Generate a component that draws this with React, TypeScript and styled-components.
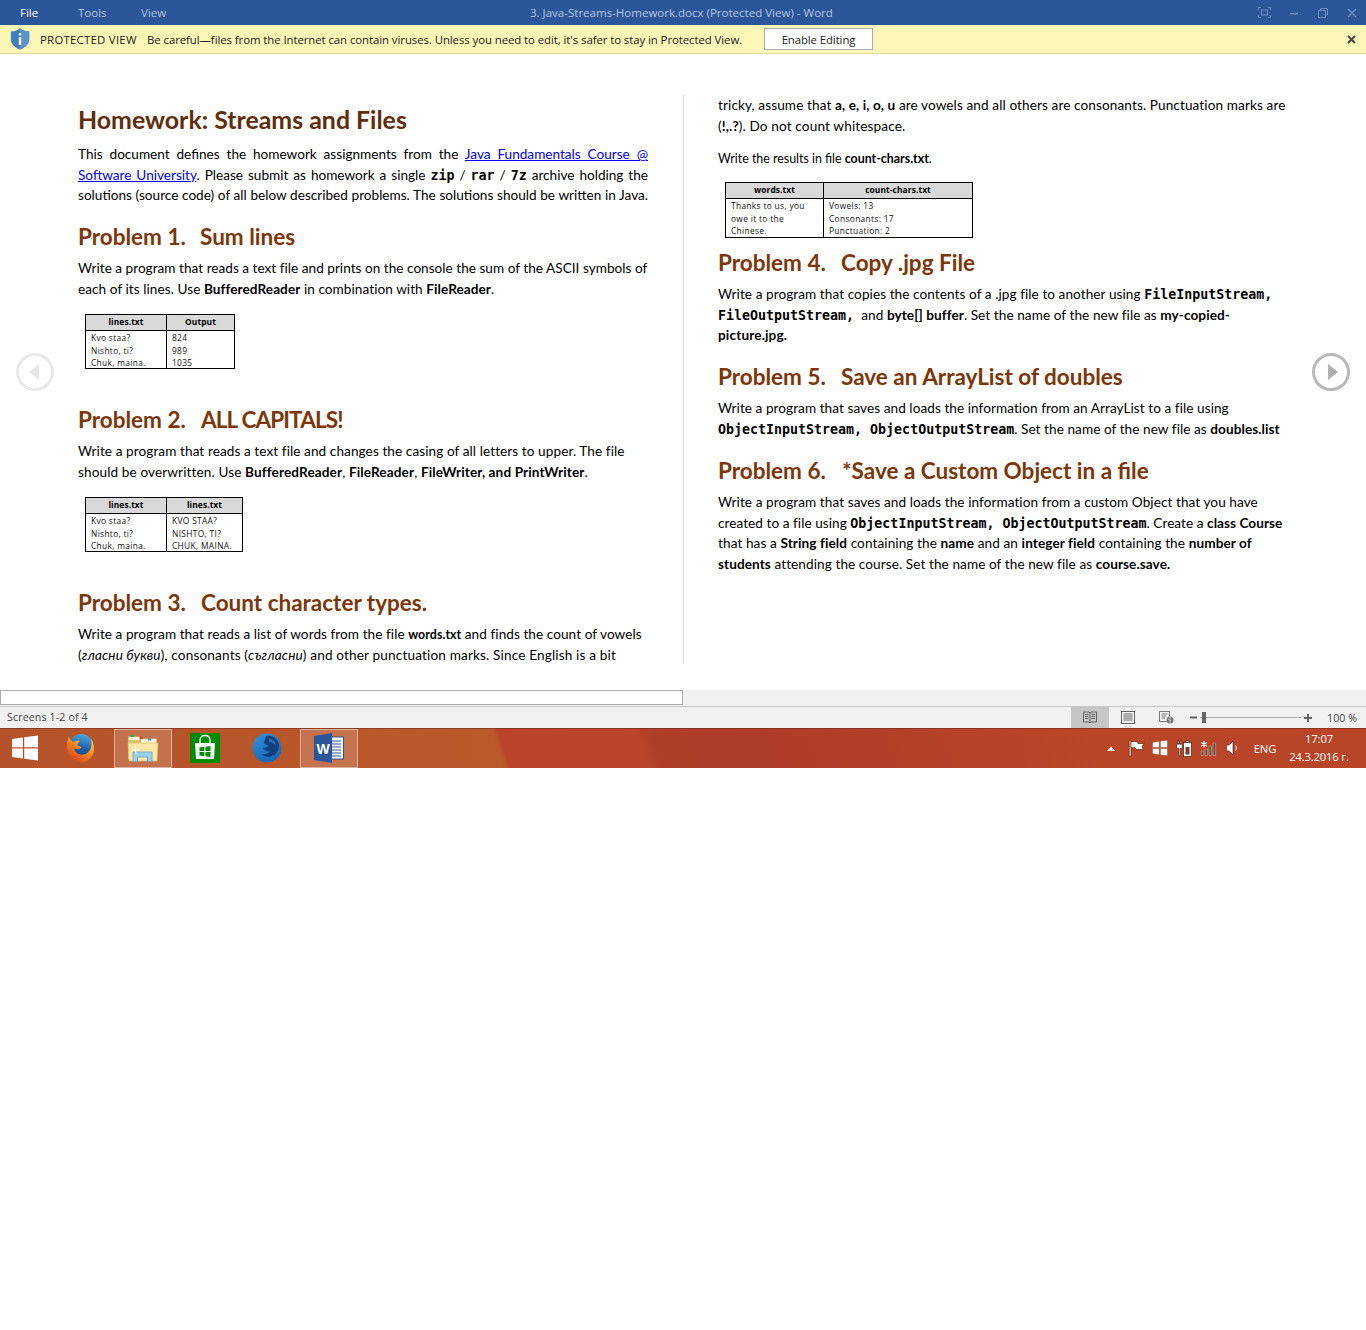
import React from 'react';
import styled, { createGlobalStyle } from 'styled-components';

const GlobalStyle = createGlobalStyle`
  html, body {
    margin: 0;
    padding: 0;
    background: #fff;
  }
  body {
    font-family: Lato, "Open Sans", sans-serif;
    color: #000;
  }
`;

const Screen = styled.div`
  width: 1366px;
  height: 768px;
  position: relative;
  overflow: hidden;
  display: flex;
  flex-direction: column;
`;

const TitleBar = styled.div`
  height: 25px;
  flex: none;
  background: #2b579a;
  display: flex;
  align-items: center;
  position: relative;
  font-family: "Open Sans", sans-serif;
  font-size: 11.5px;
  color: #b4c6e0;
`;

const MenuItem = styled.span<{ $active?: boolean; $width: number }>`
  width: ${({ $width }) => $width}px;
  flex: none;
  color: ${({ $active }) => ($active ? '#fff' : '#b0c3de')};
`;

const MenuRow = styled.div`
  display: flex;
  padding-left: 20px;
`;

const DocName = styled.div`
  position: absolute;
  left: 530px;
  top: 5px;
  white-space: nowrap;
  letter-spacing: 0.01px;
`;

const WindowButtons = styled.div`
  margin-left: auto;
  display: flex;
  align-items: center;
  gap: 19px;
  padding-right: 9px;
`;

const Warning = styled.div`
  height: 28px;
  flex: none;
  background: #fcf7b6;
  border-bottom: 1px solid #e0dc9f;
  display: flex;
  align-items: center;
  font-family: "Open Sans", sans-serif;
  font-size: 11.4px;
  color: #222;
  white-space: nowrap;
`;

const ShieldWrap = styled.div`
  width: 40px;
  flex: none;
  display: flex;
  padding-left: 10px;
  box-sizing: border-box;
`;

const WarnLabel = styled.span`
  width: 107px;
  flex: none;
  letter-spacing: 0.25px;
`;

const WarnText = styled.span`
  width: 617px;
  flex: none;
  letter-spacing: -0.07px;
`;

const EnableButton = styled.button`
  width: 109px;
  height: 22px;
  flex: none;
  background: #fff;
  border: 1px solid #aaa;
  padding: 0;
  font: inherit;
  letter-spacing: -0.1px;
  color: #222;
`;

const WarnClose = styled.div`
  margin-left: auto;
  padding-right: 10px;
  display: flex;
`;

const DocArea = styled.div`
  height: 636px;
  flex: none;
  background: #fff;
  position: relative;
`;

const Spread = styled.div`
  display: flex;
  padding-top: 41px;
`;

const Column = styled.div<{ $left?: boolean }>`
  width: 570px;
  flex: none;
  margin-left: ${({ $left }) => ($left ? 78 : 34)}px;
  padding-right: ${({ $left }) => ($left ? 35 : 0)}px;
  padding-top: ${({ $left }) => ($left ? 9 : 0)}px;
  height: ${({ $left }) => ($left ? 560 : 569)}px;
  border-right: ${({ $left }) => ($left ? '1px solid #dcdcdc' : 'none')};
`;

const Title = styled.h1`
  margin: 0;
  height: 32px;
  line-height: 30px;
  font-size: 24.9px;
  font-weight: 700;
  color: #622d0b;
  white-space: nowrap;
`;

const Heading = styled.h2<{ $top: number }>`
  margin: ${({ $top }) => $top}px 0 0;
  height: 30px;
  line-height: 32px;
  font-size: 22.5px;
  font-weight: 700;
  color: #7c3609;
  white-space: nowrap;
  display: flex;
`;

const HeadingNum = styled.span<{ $width: number }>`
  width: ${({ $width }) => $width}px;
  flex: none;
`;

const HeadingText = styled.span<{ $spacing?: number }>`
  letter-spacing: ${({ $spacing }) => $spacing ?? 0}px;
`;

const Para = styled.div<{ $top: number }>`
  margin-top: ${({ $top }) => $top}px;
`;

const Line = styled.div<{ $justify?: boolean; $spacing?: number }>`
  height: 20.5px;
  line-height: 20.5px;
  font-size: 13.6px;
  white-space: nowrap;
  letter-spacing: ${({ $spacing }) => $spacing ?? 0}px;
  text-align: ${({ $justify }) => ($justify ? 'justify' : 'left')};
  text-align-last: ${({ $justify }) => ($justify ? 'justify' : 'left')};
`;

const SmallLine = styled.div`
  margin-top: 12px;
  height: 20px;
  line-height: 22px;
  font-size: 12.4px;
`;

const Bold = styled.b`
  font-weight: 700;
`;

const SmallBold = styled.b`
  font-weight: 700;
  font-size: 12.4px;
`;

const Code = styled.b`
  font-family: "DejaVu Sans Mono", monospace;
  font-size: 13.3px;
  font-weight: 700;
  letter-spacing: 0;
`;

const Link = styled.a`
  color: #0000ff;
  text-decoration: underline;
`;

const SampleTable = styled.div<{ $cols: string; $top: number }>`
  margin: ${({ $top }) => $top}px 0 0 7px;
  display: inline-grid;
  grid-template-columns: ${({ $cols }) => $cols};
  border: 1px solid #000;
  font-family: "Open Sans", sans-serif;
  font-size: 8.4px;
  vertical-align: top;
`;

const HeadCell = styled.div<{ $divide?: boolean }>`
  height: 15px;
  line-height: 14px;
  background: #d9d9d9;
  border-bottom: 1px solid #000;
  border-right: ${({ $divide }) => ($divide ? '1px solid #000' : 'none')};
  text-align: center;
  font-weight: 700;
  letter-spacing: 0.1px;
`;

const BodyCell = styled.div<{ $divide?: boolean; $tall?: boolean }>`
  height: ${({ $tall }) => ($tall ? 37 : 36)}px;
  padding: 1px 0 0 5px;
  border-right: ${({ $divide }) => ($divide ? '1px solid #000' : 'none')};
  white-space: nowrap;
  letter-spacing: 0.33px;
  color: #111;
`;

const TableSlot = styled.div`
  line-height: 0;
`;

const CellText = styled.div`
  line-height: 12.5px;
`;

const NavCircle = styled.div<{ $side: 'left' | 'right' }>`
  position: absolute;
  top: 299px;
  ${({ $side }) => ($side === 'left' ? 'left: 16px;' : 'right: 16px;')}
  width: 38px;
  height: 38px;
  box-sizing: border-box;
  border-radius: 50%;
  border: 3px solid ${({ $side }) => ($side === 'left' ? '#e9e9e9' : '#b9b9b9')};
  display: flex;
  align-items: center;
  justify-content: center;
`;

const NavArrow = styled.div<{ $side: 'left' | 'right' }>`
  width: 0;
  height: 0;
  border-top: 8px solid transparent;
  border-bottom: 8px solid transparent;
  ${({ $side }) =>
    $side === 'left'
      ? 'border-right: 10px solid #e6e6e6; margin-right: 3px;'
      : 'border-left: 10px solid #b0b0b0; margin-left: 3px;'}
`;

const ScrollRow = styled.div`
  height: 16px;
  flex: none;
  background: #f1f1f1;
`;

const ScrollThumb = styled.div`
  width: 683px;
  height: 15px;
  box-sizing: border-box;
  background: #fff;
  border: 1px solid #ababab;
`;

const StatusBar = styled.div`
  height: 22px;
  flex: none;
  box-sizing: border-box;
  background: #f1f1f1;
  border-top: 1px solid #c6c6c6;
  display: flex;
  align-items: stretch;
  font-family: "Open Sans", sans-serif;
  font-size: 10.6px;
  color: #444;
`;

const PageCount = styled.div`
  padding-left: 7px;
  width: 1064px;
  flex: none;
  display: flex;
  align-items: center;
  letter-spacing: 0.15px;
  padding-bottom: 2px;
`;

const ViewButton = styled.div<{ $active?: boolean }>`
  width: 38px;
  flex: none;
  display: flex;
  align-items: center;
  justify-content: center;
  background: ${({ $active }) => ($active ? '#c6c6c6' : 'transparent')};
`;

const ZoomBox = styled.div`
  display: flex;
  align-items: center;
  margin-left: 5px;
`;

const ZoomTrack = styled.div`
  width: 101px;
  height: 1px;
  background: #ababab;
  position: relative;
  margin: 0 3px;
`;

const ZoomKnob = styled.div`
  position: absolute;
  left: 2px;
  top: -5px;
  width: 4px;
  height: 11px;
  background: #666;
`;

const ZoomLabel = styled.div`
  margin-left: 15px;
  white-space: nowrap;
  letter-spacing: 0.1px;
  display: flex;
  align-items: center;
`;

const Taskbar = styled.div`
  height: 40px;
  flex: none;
  background: linear-gradient(
    72deg,
    #b5522a 0%,
    #bb5a2b 36.6%,
    #b9442a 37%,
    #ba452a 47%,
    #ae3d2a 48%,
    #ae3c2a 56%,
    #ba4628 80%,
    #b94528 100%
  );
  box-shadow: inset 0 1px 0 rgba(90, 30, 10, 0.45);
  display: flex;
  align-items: center;
  color: #fff;
  font-family: "Open Sans", sans-serif;
`;

const TaskSlot = styled.div<{ $open?: boolean; $width: number; $shift?: number }>`
  width: ${({ $width }) => $width}px;
  height: 39px;
  flex: none;
  box-sizing: border-box;
  display: flex;
  align-items: center;
  justify-content: center;
  padding-right: ${({ $shift }) => $shift ?? 0}px;
  ${({ $open }) =>
    $open
      ? 'background: rgba(255,255,255,0.17); border: 1px solid rgba(255,255,255,0.45);'
      : ''}
`;

const Tray = styled.div`
  margin-left: auto;
  display: flex;
  align-items: center;
`;

const TrayIcon = styled.div<{ $width: number }>`
  width: ${({ $width }) => $width}px;
  flex: none;
  display: flex;
  justify-content: center;
`;

const Lang = styled.div`
  width: 30px;
  margin-left: 6px;
  text-align: center;
  font-size: 11.3px;
  letter-spacing: -0.2px;
`;

const Clock = styled.div`
  width: 78px;
  padding: 0 8px 0 0;
  text-align: center;
  font-size: 11.3px;
  line-height: 18px;
  letter-spacing: -0.2px;
  white-space: nowrap;
`;

const Shield = () => (
  <svg width="20" height="22" viewBox="0 0 20 22">
    <path d="M10 0.5 C7.5 2.6 4 3.4 0.8 3.4 V11 C0.8 16 5 19.8 10 21.5 C15 19.8 19.2 16 19.2 11 V3.4 C16 3.4 12.5 2.6 10 0.5 Z" fill="#3f7fbd" />
    <path d="M10 0.5 C12.5 2.6 16 3.4 19.2 3.4 V11 C19.2 16 15 19.8 10 21.5 Z" fill="#5b93c9" />
    <rect x="8.8" y="5" width="2.4" height="2.4" fill="#fff" />
    <rect x="8.8" y="9" width="2.4" height="8" fill="#fff" />
  </svg>
);

const SmallX = () => (
  <svg width="9" height="9" viewBox="0 0 9 9">
    <path d="M1 1 L8 8 M8 1 L1 8" stroke="#444" strokeWidth="2" />
  </svg>
);

const WinControls = () => (
  <WindowButtons>
    <svg width="13" height="11" viewBox="0 0 13 11" fill="none" stroke="#6d8dbb">
      <path d="M0.5 3 V0.5 H3 M10 0.5 H12.5 V3 M12.5 8 V10.5 H10 M3 10.5 H0.5 V8" />
      <rect x="3.5" y="3" width="6" height="5" />
    </svg>
    <svg width="9" height="9" viewBox="0 0 9 9"><rect x="0" y="5" width="8" height="1.5" fill="#6d8dbb" /></svg>
    <svg width="10" height="10" viewBox="0 0 10 10" fill="none" stroke="#6d8dbb">
      <path d="M2.5 2.5 V0.5 H9.5 V7 H7.5" />
      <rect x="0.5" y="2.5" width="7" height="7" />
    </svg>
    <svg width="10" height="10" viewBox="0 0 10 10"><path d="M1 1 L9 9 M9 1 L1 9" stroke="#6d8dbb" strokeWidth="1.4" /></svg>
  </WindowButtons>
);

const BookIcon = () => (
  <svg width="14" height="13" viewBox="0 0 14 13" fill="none" stroke="#666">
    <path d="M0.5 1 H6 L7 2 L8 1 H13.5 V11 H8 L7 12 L6 11 H0.5 Z M7 2 V12" />
    <path d="M2 3.5 H5.5 M2 5.5 H5.5 M2 7.5 H5.5 M8.5 3.5 H12 M8.5 5.5 H12 M8.5 7.5 H12" />
  </svg>
);

const PrintIcon = () => (
  <svg width="14" height="13" viewBox="0 0 14 13" fill="none" stroke="#666">
    <rect x="0.5" y="0.5" width="13" height="12" />
    <path d="M2.5 3 H11.5 M2.5 5 H11.5 M2.5 7 H11.5 M2.5 9 H11.5" />
  </svg>
);

const WebIcon = () => (
  <svg width="15" height="13" viewBox="0 0 15 13" fill="none" stroke="#777">
    <path d="M8 10.5 H0.5 V0.5 H10.5 V5" />
    <path d="M2.5 3 H8.5 M2.5 5 H7 M2.5 7 H6" />
    <circle cx="11" cy="9" r="3.5" fill="#777" stroke="none" />
    <path d="M9 8 L12 10 M11 6 V12" stroke="#ddd" strokeWidth="0.7" />
  </svg>
);

const WinLogo = () => (
  <svg width="28" height="26" viewBox="0 0 28 26" fill="#fff">
    <path d="M1 4 L12 2.5 V12.2 H1 Z M13.2 2.3 L27 0.4 V12.2 H13.2 Z M1 13.6 H12 V23.5 L1 22 Z M13.2 13.6 H27 V25.6 L13.2 23.7 Z" />
  </svg>
);

const Firefox = () => (
  <svg width="30" height="30" viewBox="0 0 30 30">
    <defs>
      <linearGradient id="ffGlobe" x1="0.6" y1="0" x2="0.4" y2="1">
        <stop offset="0" stopColor="#4fa8e0" />
        <stop offset="0.6" stopColor="#1c5aa6" />
        <stop offset="1" stopColor="#17408a" />
      </linearGradient>
      <linearGradient id="ffFox" x1="0.8" y1="0.1" x2="0.2" y2="1">
        <stop offset="0" stopColor="#ffc93a" />
        <stop offset="0.45" stopColor="#f58420" />
        <stop offset="1" stopColor="#cf3d1b" />
      </linearGradient>
    </defs>
    <circle cx="16" cy="13.5" r="12.5" fill="url(#ffGlobe)" />
    <path d="M3.5 3.5 C3 6 3 7 2.2 9 C0 18 6 29.5 15.5 29.5 C24 29.5 29.5 22.5 29 14.5 C28.8 11 27.5 7.5 25.5 5 C26.8 8.5 27 11 26 14 C25 19 20.5 22.5 15.5 21.5 C12 20.8 9.5 18.5 9.3 15.5 C11.5 16.5 14 16.5 16 15 C17 14 14.5 13 12.6 12.7 C12 11 13 9.5 15 8.2 C12 7.2 9.5 8 8.2 9 C6.5 8 4.5 6 3.5 3.5 Z" fill="url(#ffFox)" />
  </svg>
);

const Explorer = () => (
  <svg width="32" height="29" viewBox="0 0 32 29">
    <path d="M1 2.5 H12 L14 4.5 H30 V25 H1 Z" fill="#dcbf72" />
    <path d="M2 3 H12 V6 H2 Z" fill="#fdf6d8" />
    <path d="M14 5 H29 V9 H14 Z" fill="#fdf6d8" />
    <rect x="4" y="1" width="3" height="2" fill="#27b34a" />
    <rect x="13" y="3" width="3" height="2" fill="#c5482f" />
    <rect x="21" y="4.5" width="3" height="2" fill="#2f8ad8" />
    <path d="M1 9 H31 L30 27 H2 Z" fill="#fbe8a4" stroke="#d9bc6c" strokeWidth="0.7" />
    <path d="M6 27.5 V18 H25 V27.5 H20.5 V23 H10.5 V27.5 Z" fill="#9ccfe9" stroke="#5f9fca" strokeWidth="0.8" />
    <path d="M8 12 L9 20 M5 16 H13" stroke="#fff" strokeWidth="1" />
  </svg>
);

const Store = () => (
  <svg width="30" height="30" viewBox="0 0 30 30">
    <rect width="30" height="30" fill="#008a00" />
    <path d="M5 10 H25 L24 26 H6 Z" fill="#fff" />
    <path d="M10 12 V7 C10 3.5 12.5 2.5 15 2.5 C17.5 2.5 20 3.5 20 7 V12" fill="none" stroke="#fff" strokeWidth="1.3" />
    <path d="M9.5 14.5 L14.3 13.8 V18 H9.5 Z M15.4 13.7 L20.5 13 V18 H15.4 Z M9.5 19 H14.3 V23.2 L9.5 22.5 Z M15.4 19 H20.5 V24 L15.4 23.3 Z" fill="#008a00" />
  </svg>
);

const Thunderbird = () => (
  <svg width="30" height="30" viewBox="0 0 30 30">
    <defs>
      <linearGradient id="tbRim" x1="0.2" y1="0" x2="0.7" y2="1">
        <stop offset="0" stopColor="#2f8ed8" />
        <stop offset="1" stopColor="#1765b5" />
      </linearGradient>
    </defs>
    <circle cx="15" cy="15" r="14.5" fill="url(#tbRim)" />
    <path d="M14 3 C19 1.8 25 4.5 26.5 10 C28 15.5 25 21 20 23 C16 24.5 12 23.5 10 21 C13 21.5 17 20.5 18.5 18 C15.5 18.5 12.5 17.5 11 15 C14 15 16 14 16.5 12.5 C14.5 12 12.5 11 12 9.5 C13 6.5 13.5 4.5 14 3 Z" fill="#123f7e" />
    <path d="M17 5.5 C21 6 24 9 24 13 C22 10.5 19.5 9 17 9 Z" fill="#2a6cb5" />
  </svg>
);

const WordIcon = () => (
  <svg width="30" height="30" viewBox="0 0 30 30">
    <rect x="13" y="4" width="16.5" height="22" fill="#fff" stroke="#2b579a" />
    <path d="M18 8 H27 M18 11 H27 M18 14 H27 M18 17 H27 M18 20 H27 M18 23 H27" stroke="#2b579a" strokeWidth="1.2" />
    <path d="M0 3 L18 0 V30 L0 27 Z" fill="#2b579a" />
    <text x="2.5" y="20.5" fontFamily="Liberation Sans, sans-serif" fontWeight="700" fontSize="14" fill="#fff">W</text>
  </svg>
);

const TrayUp = () => (
  <svg width="8" height="5" viewBox="0 0 8 5"><path d="M0 5 L4 0.5 L8 5 Z" fill="#fff" /></svg>
);

const TrayFlag = () => (
  <svg width="17" height="17" viewBox="0 0 17 17" fill="#fff" stroke="#5a2310" strokeWidth="0.7">
    <path d="M1.2 0.8 H3 V16.2 H1.2 Z" />
    <path d="M3 1.5 H9 L10 3.5 H16.2 L14 6.5 L15.5 9.5 H8 L7 7.8 H3 Z" />
  </svg>
);

const TrayWin = () => (
  <svg width="16" height="16" viewBox="0 0 16 16" fill="#fff" stroke="#7a3018" strokeWidth="0.4">
    <path d="M0.5 2.2 L7.3 1.3 V7.4 H0.5 Z M8.4 1.1 L15.5 0.2 V7.4 H8.4 Z M0.5 8.6 H7.3 V14.7 L0.5 13.8 Z M8.4 8.6 H15.5 V15.8 L8.4 14.9 Z" />
  </svg>
);

const TrayPower = () => (
  <svg width="16" height="17" viewBox="0 0 16 17" fill="#fff" stroke="#4a1c0c" strokeWidth="0.7">
    <rect x="10" y="0.7" width="3" height="2" />
    <rect x="7.5" y="2.5" width="8" height="14" />
    <rect x="9.5" y="7" width="4" height="7.5" fill="#8a3a20" stroke="none" />
    <path d="M1.8 0.7 H3 V4 H1.8 Z M4 0.7 H5.2 V4 H4 Z M0.7 4 H6.3 V8.5 H4.2 V16 H2.8 V8.5 H0.7 Z" />
  </svg>
);

const TraySignal = () => (
  <svg width="17" height="16" viewBox="0 0 17 16">
    <path d="M1 11 H3.6 V15.5 H1 Z M5 9 H7.6 V15.5 H5 Z M9 6 H11.6 V15.5 H9 Z M13 3 H15.6 V15.5 H13 Z" fill="#6b5145" stroke="#d7b5a5" strokeWidth="0.5" />
    <path d="M4 1 V7.5 M1.2 2.6 L6.8 5.9 M6.8 2.6 L1.2 5.9" stroke="#fff" strokeWidth="1.2" />
  </svg>
);

const TrayVolume = () => (
  <svg width="13" height="16" viewBox="0 0 13 16" fill="#fff" stroke="#4a1c0c" strokeWidth="0.6">
    <path d="M0.7 5 H3 L7 1 V15 L3 11 H0.7 Z" />
    <path d="M9.5 5.5 C10.5 7 10.5 9 9.5 10.5" fill="none" stroke="#fff" strokeWidth="1" />
  </svg>
);

const Sample: React.FC<{
  cols: string;
  top: number;
  tall?: boolean;
  heads: [string, string];
  left: string[];
  right: string[];
}> = ({ cols, top, tall, heads, left, right }) => (
  <TableSlot>
    <SampleTable $cols={cols} $top={top}>
      <HeadCell $divide>{heads[0]}</HeadCell>
      <HeadCell>{heads[1]}</HeadCell>
      <BodyCell $divide $tall={tall}>
        {left.map((t) => (
          <CellText key={t}>{t}</CellText>
        ))}
      </BodyCell>
      <BodyCell $tall={tall}>
        {right.map((t) => (
          <CellText key={t}>{t}</CellText>
        ))}
      </BodyCell>
    </SampleTable>
  </TableSlot>
);

const ProblemHeading: React.FC<{
  top: number;
  num: string;
  width: number;
  text: string;
  spacing?: number;
}> = ({ top, num, width, text, spacing }) => (
  <Heading $top={top}>
    <HeadingNum $width={width}>{num}</HeadingNum>
    <HeadingText $spacing={spacing}>{text}</HeadingText>
  </Heading>
);

export default function App() {
  return (
    <>
      <GlobalStyle />
      <Screen>
        <TitleBar>
          <MenuRow>
            <MenuItem $active $width={58}>File</MenuItem>
            <MenuItem $width={63}>Tools</MenuItem>
            <MenuItem $width={40}>View</MenuItem>
          </MenuRow>
          <DocName>3. Java-Streams-Homework.docx (Protected View) - Word</DocName>
          <WinControls />
        </TitleBar>

        <Warning>
          <ShieldWrap>
            <Shield />
          </ShieldWrap>
          <WarnLabel>PROTECTED VIEW</WarnLabel>
          <WarnText>Be careful—files from the Internet can contain viruses. Unless you need to edit, it's safer to stay in Protected View.</WarnText>
          <EnableButton>Enable Editing</EnableButton>
          <WarnClose>
            <SmallX />
          </WarnClose>
        </Warning>

        <DocArea>
          <Spread>
            <Column $left>
              <Title>Homework: Streams and Files</Title>
              <Para $top={8}>
                <Line $justify>
                  This document defines the homework assignments from the <Link>Java Fundamentals Course @</Link>
                </Line>
                <Line $justify>
                  <Link>Software University</Link>. Please submit as homework a single <Code>zip</Code> / <Code>rar</Code> / <Code>7z</Code> archive holding the
                </Line>
                <Line $justify>
                  solutions (source code) of all below described problems. The solutions should be written in Java.
                </Line>
              </Para>

              <ProblemHeading top={15.5} num="Problem 1." width={122} text="Sum lines" />
              <Para $top={7}>
                <Line $spacing={0.02}>Write a program that reads a text file and prints on the console the sum of the ASCII symbols of</Line>
                <Line $spacing={0.06}>
                  each of its lines. Use <Bold>BufferedReader</Bold> in combination with <Bold>FileReader</Bold>.
                </Line>
              </Para>
              <Sample
                cols="81px 67px"
                top={15}
                heads={['lines.txt', 'Output']}
                left={['Kvo staa?', 'Nishto, ti?', 'Chuk, maina.']}
                right={['824', '989', '1035']}
              />

              <ProblemHeading top={35} num="Problem 2." width={123} text="ALL CAPITALS!" spacing={-0.85} />
              <Para $top={7}>
                <Line $spacing={0.08}>Write a program that reads a text file and changes the casing of all letters to upper. The file</Line>
                <Line $spacing={0.11}>
                  should be overwritten. Use <Bold>BufferedReader</Bold>, <Bold>FileReader</Bold>, <Bold>FileWriter, and PrintWriter</Bold>.
                </Line>
              </Para>
              <Sample
                cols="81px 75px"
                top={15}
                heads={['lines.txt', 'lines.txt']}
                left={['Kvo staa?', 'Nishto, ti?', 'Chuk, maina.']}
                right={['KVO STAA?', 'NISHTO, TI?', 'CHUK, MAINA.']}
              />

              <ProblemHeading top={35} num="Problem 3." width={123} text="Count character types." />
              <Para $top={7}>
                <Line $spacing={0.06}>
                  Write a program that reads a list of words from the file <SmallBold>words.txt</SmallBold> and finds the count of vowels
                </Line>
                <Line $spacing={0.15}>
                  (<i>гласни букви</i>), consonants (<i>съгласни</i>) and other punctuation marks. Since English is a bit
                </Line>
              </Para>
            </Column>

            <Column>
              <Line $spacing={0.1}>
                tricky, assume that <Bold>a, e, i, o, u</Bold> are vowels and all others are consonants. Punctuation marks are
              </Line>
              <Line $spacing={0.13}>
                (<Bold>!,.?</Bold>). Do not count whitespace.
              </Line>
              <SmallLine>
                Write the results in file <SmallBold>count-chars.txt</SmallBold>.
              </SmallLine>
              <Sample
                cols="98px 148px"
                top={14}
                tall
                heads={['words.txt', 'count-chars.txt']}
                left={['Thanks to us, you', 'owe it to the', 'Chinese.']}
                right={['Vowels: 13', 'Consonants: 17', 'Punctuation: 2']}
              />

              <ProblemHeading top={9} num="Problem 4." width={123} text="Copy .jpg File" />
              <Para $top={7}>
                <Line $spacing={0.07}>
                  Write a program that copies the contents of a .jpg file to another using <Code>FileInputStream,</Code>
                </Line>
                <Line $spacing={0.07}>
                  <Code>FileOutputStream,</Code>&nbsp; and <Bold>byte[] buffer</Bold>. Set the name of the new file as <Bold>my-copied-</Bold>
                </Line>
                <Line $spacing={0.15}>
                  <Bold>picture.jpg.</Bold>
                </Line>
              </Para>

              <ProblemHeading top={15.5} num="Problem 5." width={123} text="Save an ArrayList of doubles" />
              <Para $top={7}>
                <Line $spacing={0.06}>Write a program that saves and loads the information from an ArrayList to a file using</Line>
                <Line $spacing={0.06}>
                  <Code>ObjectInputStream, ObjectOutputStream</Code>. Set the name of the new file as <Bold>doubles.list</Bold>
                </Line>
              </Para>

              <ProblemHeading top={16} num="Problem 6." width={124} text="*Save a Custom Object in a file" />
              <Para $top={7}>
                <Line $spacing={0.07}>Write a program that saves and loads the information from a custom Object that you have</Line>
                <Line $spacing={0.05}>
                  created to a file using <Code>ObjectInputStream, ObjectOutputStream</Code>. Create a <Bold>class Course</Bold>
                </Line>
                <Line $spacing={0.09}>
                  that has a <Bold>String field</Bold> containing the <Bold>name</Bold> and an <Bold>integer field</Bold> containing the <Bold>number of</Bold>
                </Line>
                <Line $spacing={0.08}>
                  <Bold>students</Bold> attending the course. Set the name of the new file as <Bold>course.save.</Bold>
                </Line>
              </Para>
            </Column>
          </Spread>
          <NavCircle $side="left">
            <NavArrow $side="left" />
          </NavCircle>
          <NavCircle $side="right">
            <NavArrow $side="right" />
          </NavCircle>
        </DocArea>

        <ScrollRow>
          <ScrollThumb />
        </ScrollRow>

        <StatusBar>
          <PageCount>Screens 1-2 of 4</PageCount>
          <ViewButton $active>
            <BookIcon />
          </ViewButton>
          <ViewButton>
            <PrintIcon />
          </ViewButton>
          <ViewButton>
            <WebIcon />
          </ViewButton>
          <ZoomBox>
            <svg width="7" height="7" viewBox="0 0 7 7"><rect y="2.5" width="7" height="2" fill="#666" /></svg>
            <ZoomTrack>
              <ZoomKnob />
            </ZoomTrack>
            <svg width="8" height="8" viewBox="0 0 8 8"><path d="M0 3 H8 V5 H0 Z M3 0 H5 V8 H3 Z" fill="#666" /></svg>
          </ZoomBox>
          <ZoomLabel>100 %</ZoomLabel>
        </StatusBar>

        <Taskbar>
          <TaskSlot $width={50}><WinLogo /></TaskSlot>
          <TaskSlot $width={64} $shift={4}><Firefox /></TaskSlot>
          <TaskSlot $open $width={58}><Explorer /></TaskSlot>
          <TaskSlot $width={66}><Store /></TaskSlot>
          <TaskSlot $width={62} $shift={4}><Thunderbird /></TaskSlot>
          <TaskSlot $open $width={58}><WordIcon /></TaskSlot>
          <Tray>
            <TrayIcon $width={26}><TrayUp /></TrayIcon>
            <TrayIcon $width={24}><TrayFlag /></TrayIcon>
            <TrayIcon $width={24}><TrayWin /></TrayIcon>
            <TrayIcon $width={24}><TrayPower /></TrayIcon>
            <TrayIcon $width={24}><TraySignal /></TrayIcon>
            <TrayIcon $width={24}><TrayVolume /></TrayIcon>
            <Lang>ENG</Lang>
            <Clock>
              17:07
              <br />
              24.3.2016 г.
            </Clock>
          </Tray>
        </Taskbar>
      </Screen>
    </>
  );
}
